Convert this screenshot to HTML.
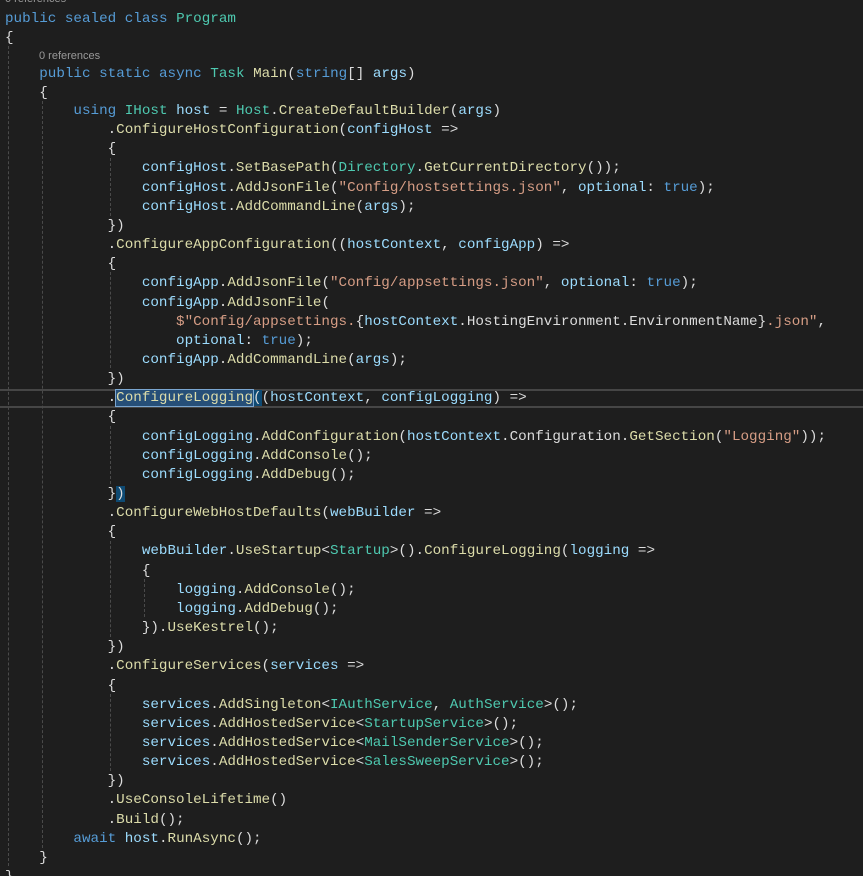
<!DOCTYPE html>
<html><head><meta charset="utf-8"><style>
html,body{margin:0;padding:0;background:#1e1e1e;width:863px;height:876px;overflow:hidden;position:relative}
.code{position:absolute;left:5px;top:1.5px;font-family:"Liberation Mono",monospace;font-size:14.25px;color:#dcdcdc;white-space:pre}
.l{position:absolute;left:0;height:19px;line-height:19px}
.cl{font-family:"Liberation Sans",sans-serif;font-size:11px;color:#999}
.k{color:#569cd6}.t{color:#4ec9b0}.m{color:#dcdcaa}.v{color:#9cdcfe}.s{color:#d69d85}
.g{position:absolute;width:0;border-left:1px dashed #4a4a4a}
.cur{position:absolute;left:0;width:863px;top:389px;height:15px;border-top:2px solid #464646;border-bottom:2px solid #464646}
.sel{background:#264f78;outline:1px solid #7aa6d0}
.bm{background:#0e4a73}
</style></head><body>
<div class="cur"></div>
<div class="g" style="left:8px;top:46px;height:820px"></div>
<div class="g" style="left:42px;top:101px;height:747px"></div>
<div class="g" style="left:110px;top:158px;height:58px"></div>
<div class="g" style="left:110px;top:272px;height:96px"></div>
<div class="g" style="left:110px;top:426px;height:58px"></div>
<div class="g" style="left:110px;top:541px;height:96px"></div>
<div class="g" style="left:144px;top:579px;height:38px"></div>
<div class="g" style="left:110px;top:694px;height:77px"></div>
<div class="code">
<div class="l cl" style="top:-12px">0 references</div>
<div class="l" style="top:8px"><span class="k">public</span> <span class="k">sealed</span> <span class="k">class</span> <span class="t">Program</span></div>
<div class="l" style="top:27px">{</div>
<div class="l cl" style="top:45px;left:34px">0 references</div>
<div class="l" style="top:63px">    <span class="k">public</span> <span class="k">static</span> <span class="k">async</span> <span class="t">Task</span> <span class="m">Main</span>(<span class="k">string</span>[] <span class="v">args</span>)</div>
<div class="l" style="top:82px">    {</div>
<div class="l" style="top:100.5px">        <span class="k">using</span> <span class="t">IHost</span> <span class="v">host</span> = <span class="t">Host</span>.<span class="m">CreateDefaultBuilder</span>(<span class="v">args</span>)</div>
<div class="l" style="top:119.65px">            .<span class="m">ConfigureHostConfiguration</span>(<span class="v">configHost</span> =&gt;</div>
<div class="l" style="top:138.8px">            {</div>
<div class="l" style="top:157.95px">                <span class="v">configHost</span>.<span class="m">SetBasePath</span>(<span class="t">Directory</span>.<span class="m">GetCurrentDirectory</span>());</div>
<div class="l" style="top:177.1px">                <span class="v">configHost</span>.<span class="m">AddJsonFile</span>(<span class="s">"Config/hostsettings.json"</span>, <span class="v">optional</span>: <span class="k">true</span>);</div>
<div class="l" style="top:196.25px">                <span class="v">configHost</span>.<span class="m">AddCommandLine</span>(<span class="v">args</span>);</div>
<div class="l" style="top:215.4px">            })</div>
<div class="l" style="top:234.55px">            .<span class="m">ConfigureAppConfiguration</span>((<span class="v">hostContext</span>, <span class="v">configApp</span>) =&gt;</div>
<div class="l" style="top:253.7px">            {</div>
<div class="l" style="top:272.85px">                <span class="v">configApp</span>.<span class="m">AddJsonFile</span>(<span class="s">"Config/appsettings.json"</span>, <span class="v">optional</span>: <span class="k">true</span>);</div>
<div class="l" style="top:292px">                <span class="v">configApp</span>.<span class="m">AddJsonFile</span>(</div>
<div class="l" style="top:311.15px">                    <span class="s">$"Config/appsettings.</span>{<span class="v">hostContext</span>.HostingEnvironment.EnvironmentName}<span class="s">.json"</span>,</div>
<div class="l" style="top:330.3px">                    <span class="v">optional</span>: <span class="k">true</span>);</div>
<div class="l" style="top:349.45px">                <span class="v">configApp</span>.<span class="m">AddCommandLine</span>(<span class="v">args</span>);</div>
<div class="l" style="top:368.6px">            })</div>
<div class="l" style="top:387.75px">            .<span class="m sel">ConfigureLogging</span><span class="bm">(</span>(<span class="v">hostContext</span>, <span class="v">configLogging</span>) =&gt;</div>
<div class="l" style="top:406.9px">            {</div>
<div class="l" style="top:426.05px">                <span class="v">configLogging</span>.<span class="m">AddConfiguration</span>(<span class="v">hostContext</span>.Configuration.<span class="m">GetSection</span>(<span class="s">"Logging"</span>));</div>
<div class="l" style="top:445.2px">                <span class="v">configLogging</span>.<span class="m">AddConsole</span>();</div>
<div class="l" style="top:464.35px">                <span class="v">configLogging</span>.<span class="m">AddDebug</span>();</div>
<div class="l" style="top:483.5px">            }<span class="bm">)</span></div>
<div class="l" style="top:502.65px">            .<span class="m">ConfigureWebHostDefaults</span>(<span class="v">webBuilder</span> =&gt;</div>
<div class="l" style="top:521.8px">            {</div>
<div class="l" style="top:540.95px">                <span class="v">webBuilder</span>.<span class="m">UseStartup</span>&lt;<span class="t">Startup</span>&gt;().<span class="m">ConfigureLogging</span>(<span class="v">logging</span> =&gt;</div>
<div class="l" style="top:560.1px">                {</div>
<div class="l" style="top:579.25px">                    <span class="v">logging</span>.<span class="m">AddConsole</span>();</div>
<div class="l" style="top:598.4px">                    <span class="v">logging</span>.<span class="m">AddDebug</span>();</div>
<div class="l" style="top:617.55px">                }).<span class="m">UseKestrel</span>();</div>
<div class="l" style="top:636.7px">            })</div>
<div class="l" style="top:655.85px">            .<span class="m">ConfigureServices</span>(<span class="v">services</span> =&gt;</div>
<div class="l" style="top:675px">            {</div>
<div class="l" style="top:694.15px">                <span class="v">services</span>.<span class="m">AddSingleton</span>&lt;<span class="t">IAuthService</span>, <span class="t">AuthService</span>&gt;();</div>
<div class="l" style="top:713.3px">                <span class="v">services</span>.<span class="m">AddHostedService</span>&lt;<span class="t">StartupService</span>&gt;();</div>
<div class="l" style="top:732.45px">                <span class="v">services</span>.<span class="m">AddHostedService</span>&lt;<span class="t">MailSenderService</span>&gt;();</div>
<div class="l" style="top:751.6px">                <span class="v">services</span>.<span class="m">AddHostedService</span>&lt;<span class="t">SalesSweepService</span>&gt;();</div>
<div class="l" style="top:770.75px">            })</div>
<div class="l" style="top:789.9px">            .<span class="m">UseConsoleLifetime</span>()</div>
<div class="l" style="top:809.05px">            .<span class="m">Build</span>();</div>
<div class="l" style="top:828.2px">        <span class="k">await</span> <span class="v">host</span>.<span class="m">RunAsync</span>();</div>
<div class="l" style="top:847.35px">    }</div>
<div class="l" style="top:866.5px">}</div>
</div>
</body></html>
